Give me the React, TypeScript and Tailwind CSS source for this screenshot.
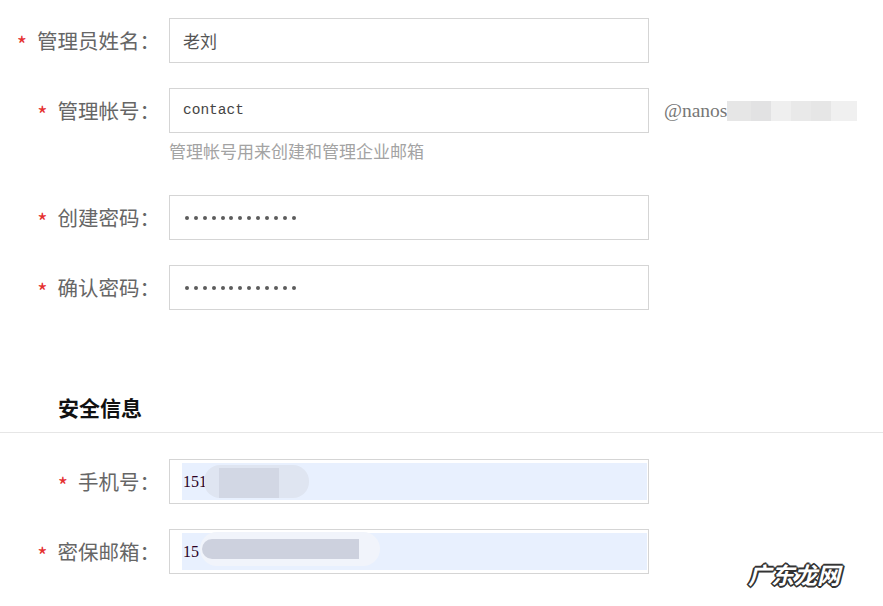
import React from 'react';

const cjk = { fontFamily: '"Noto Sans CJK SC", "Noto Sans", sans-serif' };

function Label({ text }: { text: string }) {
  return (
    <div className="flex w-[160px] shrink-0 items-center justify-end text-[20.5px] leading-none text-[#666]">
      <span className="mr-[10px] mt-[4px] text-[22px] text-[#e5302f]">*</span>
      <span>{text}：</span>
    </div>
  );
}

function Box({ children, className = '' }: { children?: React.ReactNode; className?: string }) {
  return (
    <div
      className={`relative ml-[9px] flex h-[45px] w-[480px] items-center border border-[#d5d5d5] bg-white ${className}`}
    >
      {children}
    </div>
  );
}

function Dots() {
  return (
    <div className="flex gap-[4.9px] pl-[15px]">
      {Array.from({ length: 13 }).map((_, i) => (
        <span key={i} className="h-[4px] w-[4px] rounded-full bg-[#5c5c5c]" />
      ))}
    </div>
  );
}

function Autofill({ value, children }: { value: string; children?: React.ReactNode }) {
  return (
    <Box className="px-0 py-[3px]">
      <div className="relative ml-[12px] mr-[1px] flex h-full flex-1 items-center bg-[#e8f0fe] pl-[1px]">
        <span
          className="text-[16px] text-[#2b0024]"
          style={{ fontFamily: '"Liberation Serif", serif' }}
        >
          {value}
        </span>
        {children}
      </div>
    </Box>
  );
}

export default function App() {
  return (
    <div className="relative h-[606px] w-[883px] overflow-hidden bg-white" style={cjk}>
      <div className="pt-[18px]">
        <div className="flex items-center">
          <Label text="管理员姓名" />
          <Box className="pl-[13px]">
            <span className="text-[17px] text-[#555]">老刘</span>
          </Box>
        </div>

        <div className="mt-[25px] flex items-center">
          <Label text="管理帐号" />
          <Box className="pl-[13px]">
            <span
              className="text-[14.5px] text-[#444]"
              style={{ fontFamily: '"Liberation Mono", monospace' }}
            >
              contact
            </span>
          </Box>
          <span
            className="ml-[15px] text-[19.5px] text-[#777]"
            style={{ fontFamily: '"Liberation Serif", serif' }}
          >
            @nanos
          </span>
          <div className="flex h-[20px]">
            <span className="w-[24px] bg-[#e6e6e6]" />
            <span className="w-[20px] bg-[#e2e2e3]" />
            <span className="w-[20px] bg-[#efefef]" />
            <span className="w-[20px] bg-[#e9e9e9]" />
            <span className="w-[20px] bg-[#e6e6e6]" />
            <span className="w-[26px] bg-[#f0f0f0]" />
          </div>
        </div>
        <div className="ml-[169px] mt-[6px] text-[17px] leading-[24px] text-[#a3a3a3]">
          管理帐号用来创建和管理企业邮箱
        </div>

        <div className="mt-[32px] flex items-center">
          <Label text="创建密码" />
          <Box>
            <Dots />
          </Box>
        </div>

        <div className="mt-[25px] flex items-center">
          <Label text="确认密码" />
          <Box>
            <Dots />
          </Box>
        </div>

        <div className="mt-[83px] pl-[58px] text-[21px] font-bold leading-[28px] text-[#111]">
          安全信息
        </div>
        <div className="mt-[11px] h-px bg-[#e6e6e6]" />

        <div className="mt-[26px] flex items-center">
          <Label text="手机号" />
          <Autofill value="151">
            <span className="absolute left-[22px] top-[2px] h-[33px] w-[105px] rounded-[16px] bg-[#dfe5f1]" />
            <span className="absolute left-[37px] top-[5px] h-[30px] w-[60px] bg-[#d2d7e4]" />
          </Autofill>
        </div>

        <div className="mt-[25px] flex items-center">
          <Label text="密保邮箱" />
          <Autofill value="15">
            <span className="absolute left-[18px] top-[-1px] h-[34px] w-[180px] rounded-[17px] bg-[#f1f4fb]" />
            <span className="absolute left-[20px] top-[6px] h-[20px] w-[157px] rounded-l-[10px] bg-[#cdd1de]" />
          </Autofill>
        </div>
      </div>

      <div
        className="absolute left-[748px] top-[563px] text-[23px] font-bold italic leading-none text-white"
        style={{
          textShadow:
            '1px 1px 0 #333, -1px -1px 0 #333, 1px -1px 0 #333, -1px 1px 0 #333, 0 2px 0 #333, 2px 0 0 #333, 0 -2px 0 #333, -2px 0 0 #333',
        }}
      >
        广东龙网
      </div>
    </div>
  );
}
